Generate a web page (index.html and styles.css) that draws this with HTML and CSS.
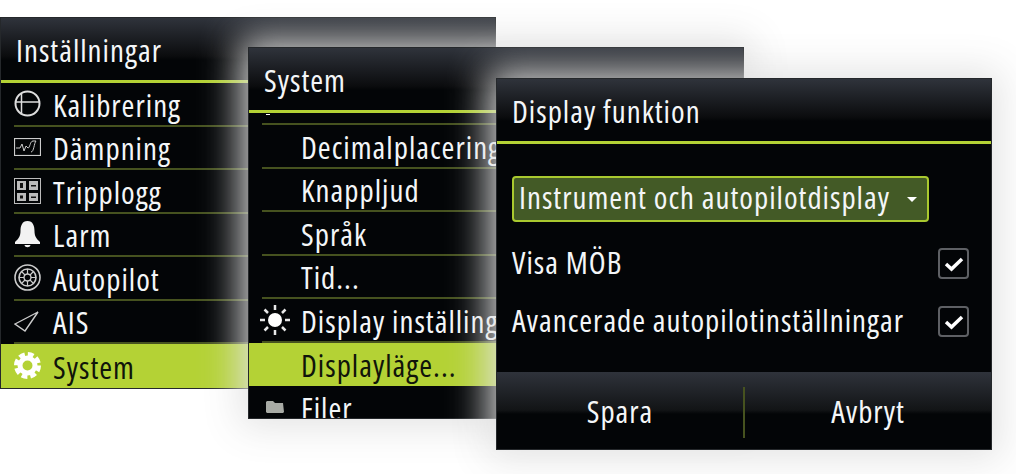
FILE: index.html
```html
<!DOCTYPE html>
<html lang="sv">
<head>
    <meta charset="UTF-8">
    <title>Display funktion</title>
    <link rel="stylesheet" href="styles.css">
</head>
<body>
    <!-- Settings menu -->
    <div class="window window-settings">
        <div class="title">Inställningar</div>
        <div class="row"><div class="row-inner">
            <span class="slot"><svg width="27" height="27" viewBox="0 0 27 27" fill="none" stroke="#ddd" stroke-width="2"><circle cx="13.5" cy="13.5" r="12"/><path d="M1.5 12H25.5M7.5 3V24" stroke-width="1.5"/></svg></span>
            <span class="label">Kalibrering</span>
        </div></div>
        <div class="row"><div class="row-inner">
            <span class="slot"><svg width="27" height="18" viewBox="0 0 27 18" fill="none" stroke="#ccc"><rect x="0.5" y="0.5" width="26" height="17" stroke-width="1.2"/><path d="M2 10H6L8 6L10 13L12 8L14 10C16 10 16 3 19 3H22C20 5 20 14 17 14" stroke-width="1"/></svg></span>
            <span class="label">Dämpning</span>
        </div></div>
        <div class="row"><div class="row-inner">
            <span class="slot"><svg width="27" height="26" viewBox="0 0 27 26"><rect x="0.5" y="0.5" width="26" height="25" fill="none" stroke="#bbb"/><path fill="#bbb" d="M3 3H12V12H3ZM15 3H24V12H15ZM3 15H12V23H3ZM15 15H24V23H15Z"/><path fill="#111" d="M6 5H9V10H6ZM17 7H22V8.5H17ZM6 17.500H9V20.500H6ZM17 18.500H22V20H17Z"/></svg></span>
            <span class="label">Tripplogg</span>
        </div></div>
        <div class="row"><div class="row-inner">
            <span class="slot"><svg width="27" height="28" viewBox="0 0 27 28"><path fill="#f2f2f2" d="M13.500 1C8 1 6.500 6 6.500 11C6.500 16 4.500 19 1 22V24H26V22C22.500 19 20.500 16 20.500 11C20.500 6 19 1 13.500 1ZM10.500 25H16.500C16 28 11 28 10.500 25Z"/></svg></span>
            <span class="label">Larm</span>
        </div></div>
        <div class="row"><div class="row-inner">
            <span class="slot"><svg width="27" height="27" viewBox="0 0 27 27" fill="none" stroke="#ccc"><circle cx="13.500" cy="13.500" r="12.500" stroke-width="1.600"/><circle cx="13.500" cy="13.500" r="8.500" stroke-width="1.600"/><circle cx="13.500" cy="13.500" r="3.500" stroke-width="1.400"/><path d="M13.500 5V10M13.500 17V22M5 13.500H10M17 13.500H22M7.500 7.500L11 11M16 16L19.500 19.500M19.500 7.500L16 11M11 16L7.500 19.500" stroke-width="1.200"/></svg></span>
            <span class="label">Autopilot</span>
        </div></div>
        <div class="row"><div class="row-inner">
            <span class="slot"><svg width="25" height="21" viewBox="0 0 25 21" fill="none" stroke="#ccc" stroke-width="1.400"><path d="M1 13L24 1L11 20Z"/></svg></span>
            <span class="label">AIS</span>
        </div></div>
        <div class="row row-selected"><div class="row-inner">
            <span class="slot"><svg width="27" height="27" viewBox="0 0 27 27" fill="none" stroke="#fff"><circle cx="13.500" cy="13.500" r="11" stroke-width="5" stroke-dasharray="5.640 3"/><circle cx="13.500" cy="13.500" r="7.500" stroke-width="5"/></svg></span>
            <span class="label">System</span>
        </div></div>
    </div>

    <!-- System submenu, scrolled -->
    <div class="window window-system">
        <div class="title">System</div>
        <div class="row row-cut"><div class="row-inner"><span class="tick"></span></div></div>
        <div class="row"><div class="row-inner"><span class="slot"></span><span class="label">Decimalplacering</span></div></div>
        <div class="row"><div class="row-inner"><span class="slot"></span><span class="label">Knappljud</span></div></div>
        <div class="row"><div class="row-inner"><span class="slot"></span><span class="label">Språk</span></div></div>
        <div class="row"><div class="row-inner"><span class="slot"></span><span class="label">Tid...</span></div></div>
        <div class="row"><div class="row-inner">
            <span class="slot"><svg class="sun" width="32" height="32" viewBox="0 0 32 32" fill="none" stroke="#e8e8e8" stroke-width="2.500"><circle cx="16" cy="16" r="7" fill="#fff" stroke="none"/><path d="M16 1V6M16 26V31M1 16H6M26 16H31M5.500 5.500L9 9M23 23L26.500 26.500M26.500 5.500L23 9M9 23L5.500 26.500"/></svg></span>
            <span class="label">Display inställingar</span>
        </div></div>
        <div class="row row-selected"><div class="row-inner"><span class="slot"></span><span class="label">Displayläge...</span></div></div>
        <div class="row"><div class="row-inner">
            <span class="slot"><svg class="folder" width="18" height="12" viewBox="0 0 18 12"><path fill="#a8aba5" d="M1 0H7L9 2H17L18 11L17 12H1L0 11V1Z"/></svg></span>
            <span class="label">Filer</span>
        </div></div>
    </div>

    <!-- Display dialog -->
    <div class="window window-dialog">
        <div class="title">Display funktion</div>
        <div class="dialog-body">
            <div class="dropdown">
                <span class="label">Instrument och autopilotdisplay</span>
                <span class="caret"></span>
            </div>
            <div class="option">
                <span class="label">Visa MÖB</span>
                <span class="checkbox"><svg width="20" height="16" viewBox="0 0 20 16" fill="none" stroke="#fff" stroke-width="3.500"><path d="M2 8L7.500 13L18 3"/></svg></span>
            </div>
            <div class="option">
                <span class="label">Avancerade autopilotinställningar</span>
                <span class="checkbox"><svg width="20" height="16" viewBox="0 0 20 16" fill="none" stroke="#fff" stroke-width="3.500"><path d="M2 8L7.500 13L18 3"/></svg></span>
            </div>
        </div>
        <div class="footer">
            <span class="action"><span class="label">Spara</span></span>
            <span class="divider"></span>
            <span class="action"><span class="label">Avbryt</span></span>
        </div>
    </div>
</body>
</html>
```

FILE: styles.css
```css
body {
    margin: 0;
    background: #fff;
    font-family: "Open Sans", "Noto Sans", sans-serif;
    font-size: 31px;
    font-stretch: 75%;
    letter-spacing: 1px;
    color: #f4f6f8;
}
.window {
    position: absolute;
    box-sizing: border-box;
    width: 496px;
    height: 372px;
    background: #030507;
    border: 1px solid #25282b;
    overflow: hidden;
}
.window-settings {
    left: 0;
    top: 17px;
}
.window-system {
    left: 248px;
    top: 47px;
    box-shadow: 0 0 36px 8px rgba(225, 225, 225, 0.95);
}
.window-dialog {
    left: 496px;
    top: 78px;
    box-shadow: 0 0 36px 8px rgba(225, 225, 225, 0.95);
}
.title {
    box-sizing: border-box;
    height: 65px;
    padding-left: 15px;
    line-height: 64px;
    background: linear-gradient(#2f333b, #0b0c0e 38px, #030507 42px);
    border-bottom: 3px solid #b4d235;
}
.label {
    white-space: nowrap;
}
.row {
    height: 43.5px;
}
.row-inner {
    box-sizing: border-box;
    display: flex;
    align-items: center;
    height: 100%;
    margin-left: 13px;
    border-bottom: 2px solid #46521f;
}
.row-inner .label {
    margin-top: 2px;
}
.slot {
    display: flex;
    align-items: center;
    flex: none;
    width: 39px;
}
.row-selected {
    background: #b4d235;
    color: #10140a;
}
.row-selected .row-inner {
    border-bottom: none;
}
.row-cut {
    height: 12px;
}
.tick {
    width: 4px;
    height: 1px;
    margin: -8px 0 0 4px;
    background: #fff;
}
.sun {
    margin-left: -3px;
}
.folder {
    margin-left: 4px;
}
.dialog-body {
    box-sizing: border-box;
    height: 228px;
    padding: 32px 22px 0 15px;
}
.dropdown {
    box-sizing: border-box;
    display: flex;
    align-items: center;
    justify-content: space-between;
    width: 417px;
    height: 46px;
    padding: 0 10px 0 5px;
    background: #435a26;
    border: 2px solid #a9c92f;
    border-radius: 4px;
}
.dropdown .label,
.option .label,
.action .label {
    margin-bottom: 4px;
}
.caret {
    width: 0;
    height: 0;
    border-left: 5px solid transparent;
    border-right: 5px solid transparent;
    border-top: 5px solid #fff;
}
.option {
    display: flex;
    align-items: center;
    justify-content: space-between;
    height: 31px;
    margin-top: 26px;
}
.option + .option {
    margin-top: 27px;
}
.checkbox {
    box-sizing: border-box;
    display: flex;
    align-items: center;
    justify-content: center;
    width: 31px;
    height: 31px;
    border: 2px solid #5e6064;
    border-radius: 4px;
}
.footer {
    box-sizing: border-box;
    display: flex;
    align-items: center;
    height: 77px;
    padding-top: 4px;
    background: linear-gradient(#2f333b, #121416 38px, #030507 42px);
}
.action {
    display: flex;
    flex: 1;
    justify-content: center;
}
.divider {
    width: 2px;
    height: 51px;
    background: #46521f;
}
```
